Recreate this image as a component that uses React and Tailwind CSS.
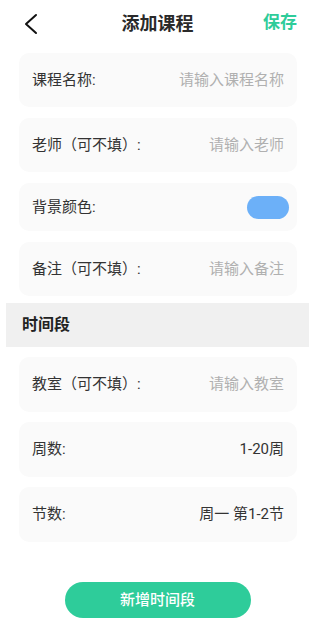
import React from 'react';

const Row = ({ label, value, placeholder, h = 'h-[54px]', children }) => (
  <div className={`ml-[19px] mr-[18px] ${h} px-[13px] flex items-center justify-between bg-[#fafafa] rounded-[10px]`}>
    <span className="text-[15px] text-[#333]">{label}</span>
    {children ? children : (
      <span className={`text-[15px] ${placeholder ? 'text-[#b0b0b0]' : 'text-[#333]'}`}>{value}</span>
    )}
  </div>
);

export default function App() {
  return (
    <div className="w-[315px] h-[620px] bg-white overflow-hidden" style={{ fontFamily: 'Roboto, "Noto Sans CJK SC", "Noto Sans", sans-serif' }}>
      {/* Header */}
      <div className="h-[46px] relative flex items-center justify-center">
        <svg className="absolute left-[22px] top-[13px]" width="18" height="22" viewBox="0 0 18 22" fill="none">
          <path d="M14 2 L4 11 L14 20" stroke="#111" strokeWidth="2" strokeLinecap="round" strokeLinejoin="round" />
        </svg>
        <span className="text-[18px] font-bold text-[#2a2a2a]">添加课程</span>
        <span className="absolute right-[18px] text-[17px] font-bold text-[#2ecc9a]">保存</span>
      </div>

      <div className="pt-[7px] flex flex-col gap-[11px]">
        <Row label="课程名称:" value="请输入课程名称" placeholder />
        <Row label="老师（可不填）:" value="请输入老师" placeholder />
        <Row label="背景颜色:" h="h-[48px]">
          <div className="w-[42px] h-[23px] rounded-full bg-[#6cb0f8] mr-[-5px]" />
        </Row>
        <Row label="备注（可不填）:" value="请输入备注" placeholder />
      </div>

      <div className="mt-[7px] mx-[6px] h-[44px] bg-[#f0f0f0] flex items-center pl-[16px]">
        <span className="text-[16px] font-bold text-[#222]">时间段</span>
      </div>

      <div className="pt-[10px] flex flex-col gap-[10px]">
        <Row label="教室（可不填）:" value="请输入教室" placeholder h="h-[55px]" />
        <Row label="周数:" value="1-20周" h="h-[55px]" />
        <Row label="节数:" value="周一 第1-2节" h="h-[55px]" />
      </div>

      <div className="mt-[40px] flex justify-center">
        <button className="w-[186px] h-[36px] rounded-full bg-[#2ecc9a] text-white text-[15px] font-medium">
          新增时间段
        </button>
      </div>
    </div>
  );
}
